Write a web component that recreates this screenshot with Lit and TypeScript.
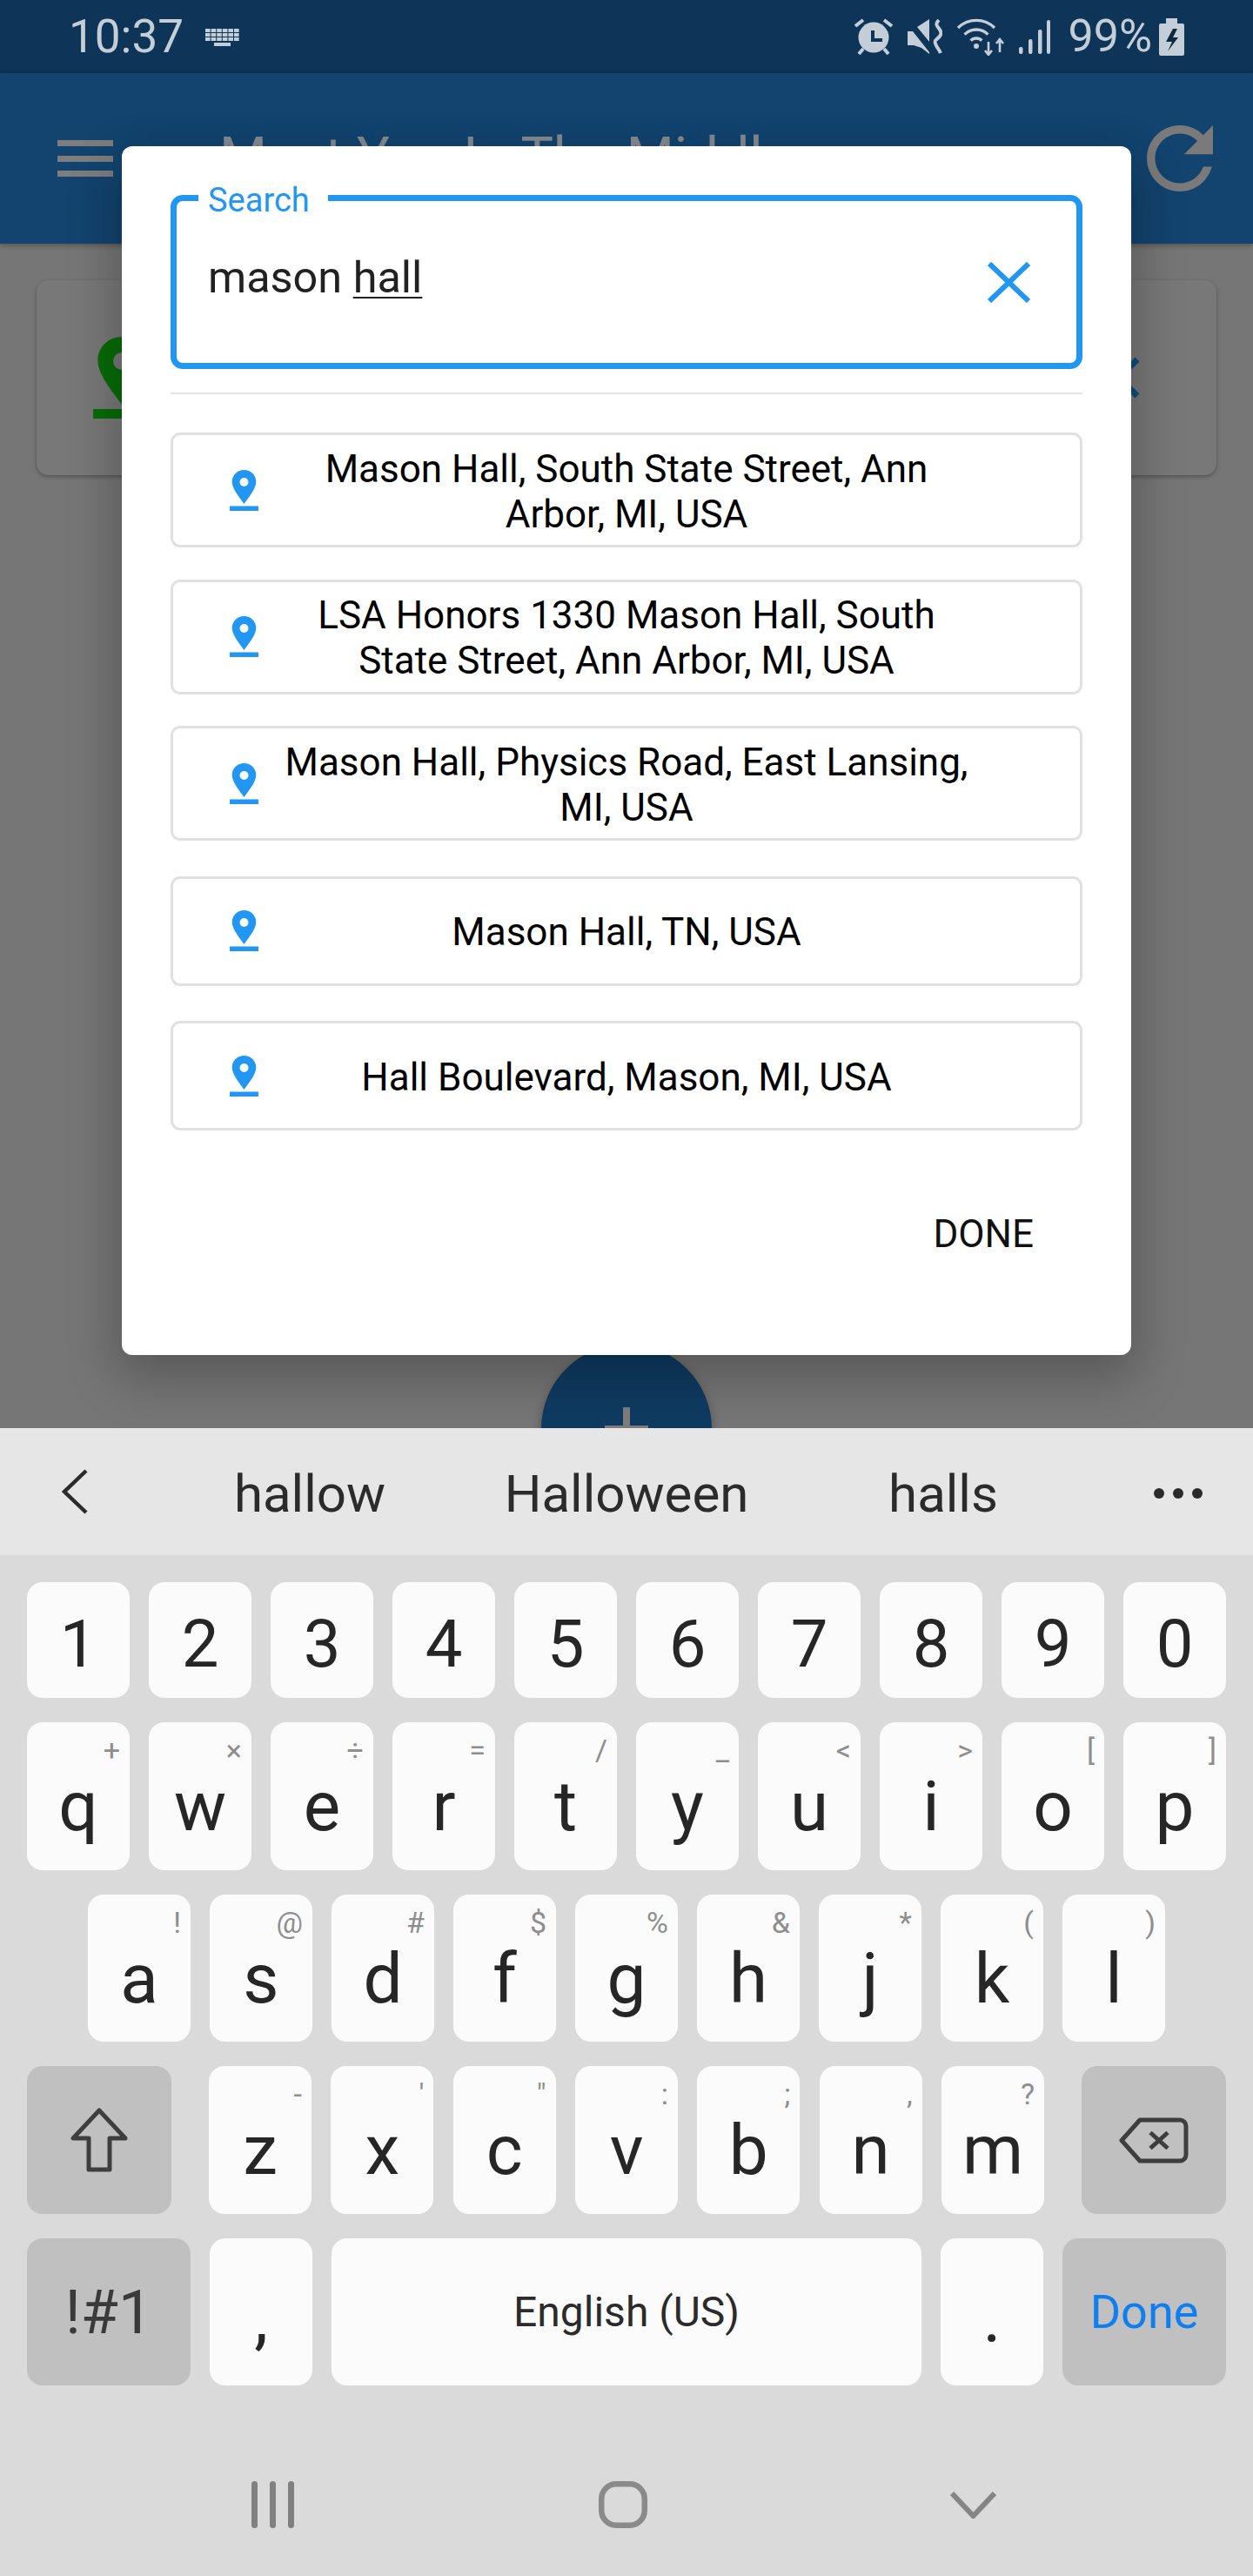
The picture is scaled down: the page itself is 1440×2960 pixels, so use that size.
import { LitElement, html, css, svg } from 'lit';
import { customElement } from 'lit/decorators.js';

type KeyDef = [string, string?];

const DIGITS = ['1', '2', '3', '4', '5', '6', '7', '8', '9', '0'];
const ROW_Q: KeyDef[] = [['q', '+'], ['w', '×'], ['e', '÷'], ['r', '='], ['t', '/'], ['y', '_'], ['u', '<'], ['i', '>'], ['o', '['], ['p', ']']];
const ROW_A: KeyDef[] = [['a', '!'], ['s', '@'], ['d', '#'], ['f', '$'], ['g', '%'], ['h', '&'], ['j', '*'], ['k', '('], ['l', ')']];
const ROW_Z: KeyDef[] = [['z', '-'], ['x', "'"], ['c', '"'], ['v', ':'], ['b', ';'], ['n', ','], ['m', '?']];

const RESULTS = [
  ['Mason Hall, South State Street, Ann', 'Arbor, MI, USA'],
  ['LSA Honors 1330 Mason Hall, South', 'State Street, Ann Arbor, MI, USA'],
  ['Mason Hall, Physics Road, East Lansing,', 'MI, USA'],
  ['Mason Hall, TN, USA'],
  ['Hall Boulevard, Mason, MI, USA'],
];

const pin = (color: string, hole: string, w: number, h: number) => html`
  <svg width=${w} height=${h} viewBox="0 0 33 47">
    ${svg`<path fill=${color} d="M16.5 0C8.8 0 2.7 6 2.7 13.5c0 8.5 9 18.5 13.8 25.5 4.8-7 13.8-17 13.8-25.5C30.3 6 24.2 0 16.5 0z"/>
    <circle cx="16.5" cy="14" r="5" fill=${hole}/>
    <rect x="0" y="41.5" width="33" height="5.5" fill=${color}/>`}
  </svg>
`;

@customElement('app-root')
export class AppRoot extends LitElement {
  static override styles = css`
    :host {
      display: block;
      width: 1440px;
      height: 2960px;
      overflow: hidden;
      font-family: Roboto, 'Liberation Sans', sans-serif;
      background: #dadada;
    }

    .screen {
      position: relative;
      height: 1641px;
      overflow: hidden;
      background: #767676;
    }

    /* status bar */
    .status {
      height: 84px;
      display: flex;
      align-items: center;
      padding: 0 79px 0 79px;
      background: #0e3557;
      color: #c3ced8;
      font-size: 53px;
      line-height: 84px;
    }
    .kbd-icon {
      margin-left: 25px;
      margin-top: 2px;
    }
    .status-right {
      margin-left: auto;
      display: flex;
      align-items: center;
      gap: 16px;
      font-size: 52px;
    }
    .pct {
      margin-left: 4px;
    }
    .batt {
      margin-left: -8px;
    }

    /* app bar */
    .appbar {
      height: 196px;
      display: flex;
      align-items: center;
      padding: 0 46px 0 66px;
      background: #12446f;
      box-shadow: 0 2px 6px rgba(0, 0, 0, 0.3);
    }
    .burger {
      width: 64px;
      height: 42px;
      display: flex;
      flex-direction: column;
      justify-content: space-between;
    }
    .burger span {
      height: 7px;
      background: #7d7d7d;
    }
    .title {
      margin-left: 122px;
      margin-bottom: 4px;
      font-size: 63px;
      color: #868b90;
      white-space: nowrap;
    }
    .refresh {
      margin-left: auto;
    }

    /* card behind the dialog */
    .card {
      margin: 42px 42px 0 42px;
      height: 224px;
      box-sizing: border-box;
      padding: 0 88px 0 65px;
      display: flex;
      align-items: center;
      justify-content: space-between;
      background: #787878;
      border-radius: 14px;
      box-shadow: 0 2px 5px rgba(0, 0, 0, 0.3);
    }

    .fab {
      position: absolute;
      left: 622px;
      top: 1544px;
      width: 196px;
      height: 196px;
      border-radius: 50%;
      background: #0f3b61;
      box-shadow: 0 4px 12px rgba(0, 0, 0, 0.3);
    }
    .fab::before,
    .fab::after {
      content: '';
      position: absolute;
      background: #7d7d7d;
    }
    .fab::before {
      left: 73px;
      top: 94px;
      width: 50px;
      height: 8px;
    }
    .fab::after {
      left: 94px;
      top: 73px;
      width: 8px;
      height: 50px;
    }

    /* dialog */
    .dialog {
      position: absolute;
      left: 140px;
      top: 168px;
      width: 1160px;
      height: 1389px;
      box-sizing: border-box;
      padding: 56px;
      background: #fff;
      border-radius: 12px;
      box-shadow: 0 24px 60px 6px rgba(0, 0, 0, 0.2), 0 9px 46px 8px rgba(0, 0, 0, 0.06);
    }
    .field {
      position: relative;
      height: 200px;
      box-sizing: border-box;
      display: flex;
      align-items: center;
      padding: 0 53px 0 36px;
      border: 7px solid #2196f3;
      border-radius: 14px;
    }
    .field-label {
      position: absolute;
      left: 25px;
      top: -19px;
      padding: 0 21px 0 11px;
      background: #fff;
      color: #2196f3;
      font-size: 38px;
      line-height: 36px;
    }
    .field-text {
      margin-bottom: 10px;
      font-size: 50.4px;
      line-height: 60px;
      color: #212121;
    }
    .field-text u {
      text-decoration-thickness: 2px;
      text-underline-offset: 5px;
    }
    .clear {
      margin-left: auto;
    }
    .divider {
      margin-top: 27px;
      height: 2px;
      background: #e4e4e4;
    }
    .results {
      margin-top: 44px;
      display: flex;
      flex-direction: column;
      gap: 36.5px;
    }
    .result {
      display: grid;
      grid-template-columns: 1fr auto 1fr;
      align-items: center;
      box-sizing: border-box;
      height: 132px;
      padding: 0 65px;
      border: 3px solid #e0e0e0;
      border-radius: 11px;
      color: #000;
      font-size: 44px;
      line-height: 52px;
      text-align: center;
    }
    .result.single {
      height: 126px;
      margin-top: 4px;
    }
    .result-text {
      padding-top: 3px;
      white-space: nowrap;
    }
    .done {
      margin-top: 94px;
      padding-right: 56px;
      text-align: right;
      font-size: 44px;
      line-height: 50px;
      color: #111;
    }

    /* keyboard */
    .suggest {
      height: 146px;
      display: grid;
      grid-template-columns: 174px 364px 364px 364px 174px;
      align-items: center;
      background: #e6e6e6;
      color: #2b2b2b;
      font-size: 60px;
      text-align: center;
    }
    .suggest span {
      padding-top: 5px;
    }
    .back {
      margin-left: 71px;
      display: block;
    }
    .dots {
      margin: 4px 0 0 60px;
      display: flex;
      gap: 10px;
    }
    .dots i {
      width: 12px;
      height: 12px;
      border-radius: 50%;
      background: #2b2b2b;
    }
    .keys {
      display: grid;
      grid-template-rows: 133px 170px 169px 170px 169px;
      row-gap: 28px;
      padding: 31px 31px 0;
    }
    .row {
      display: flex;
      gap: 22px;
    }
    .row.indent {
      padding-left: 70px;
    }
    .row.spread {
      justify-content: space-between;
    }
    .letters {
      display: flex;
      gap: 22.33px;
    }
    .key {
      position: relative;
      width: 118px;
      box-sizing: border-box;
      padding-top: 57px;
      background: #fbfbfb;
      border-radius: 18px;
      color: #262626;
      font-size: 80px;
      line-height: 80px;
      text-align: center;
    }
    .key.digit {
      padding-top: 33px;
      font-size: 76px;
      line-height: 76px;
    }
    .key.punct {
      padding-top: 52px;
    }
    .key.center {
      display: flex;
      align-items: center;
      justify-content: center;
      padding-top: 0;
    }
    .key.fn {
      background: #c0c0c0;
      color: #3a3a3a;
    }
    .key.wide-fn {
      width: 188px;
    }
    .key.icon-fn {
      width: 166px;
    }
    .key.space {
      flex: 1;
      font-size: 48px;
      color: #2b2b2b;
    }
    .key.sym {
      font-size: 70px;
    }
    .key.action {
      font-size: 54px;
      color: #0f7ef0;
    }
    .hint {
      position: absolute;
      top: 17px;
      right: 11px;
      color: #8e8e8e;
      font-size: 34px;
      line-height: 30px;
    }

    .nav {
      margin-top: 110px;
      padding-left: 112px;
      display: grid;
      grid-template-columns: repeat(3, 402.5px);
      justify-items: center;
      align-items: center;
    }
    svg {
      display: block;
    }
  `;

  private _key([label, hint]: KeyDef) {
    return html`<div class="key">${label}${hint ? html`<span class="hint">${hint}</span>` : ''}</div>`;
  }

  private _statusIcons() {
    return html`
      <svg width="44" height="42" viewBox="0 0 44 42" fill="none" stroke="#c3ced8" stroke-width="4">
        <circle cx="22" cy="22" r="17.5" fill="#c3ced8" stroke="none" />
        <path d="M21 14v11h11" stroke="#0e3557" stroke-width="4" />
        <path d="M1 9l9-7M34 2l9 7M5 41l5-6M34 35l5 6" />
      </svg>
      <svg width="41" height="40" viewBox="0 0 41 40" fill="#c3ced8">
        <path d="M1 14h6l19 24v2l-9-7-9-3H1zM12 9L26 0v26z" />
        <path d="M37 1c-8 8 5 9 2 17-3 6-8 5-6 10 1 4 4 6 6 11" fill="none" stroke="#c3ced8" stroke-width="4" />
      </svg>
      <svg width="56" height="43" viewBox="0 0 56 43" fill="none" stroke="#c3ced8" stroke-width="3.4">
        <path d="M2 11A30 30 0 0 1 44 11M9.6 18.6A19 19 0 0 1 36.4 18.6M16.6 25.6A9 9 0 0 1 29.4 25.6" />
        <circle cx="23" cy="32" r="3" fill="#c3ced8" stroke="none" />
        <path d="M37 27v14M33 37l4 5 4-5M50 39V25M46 29l4-5 4 5" stroke-width="2.6" />
      </svg>
      <svg width="36" height="40" viewBox="0 0 36 40" fill="#c3ced8">
        <rect x="0" y="32" width="4.5" height="8" rx="2" />
        <rect x="11" y="23" width="4.5" height="17" rx="2" />
        <rect x="22" y="12" width="4.5" height="28" rx="2" />
        <rect x="32" y="1" width="4" height="39" rx="2" />
      </svg>
      <span class="pct">99%</span>
      <svg class="batt" width="29" height="43" viewBox="0 0 29 43">
        <path fill="#c3ced8" d="M8 0h13v6h6a2 2 0 0 1 2 2v33a2 2 0 0 1-2 2H2a2 2 0 0 1-2-2V8a2 2 0 0 1 2-2h6z" />
        <path fill="#10293f" d="M16 12L8 27h7l-5 11 12-16h-6l5-10z" />
      </svg>
    `;
  }

  private _keyboardGlyph() {
    const squares = [0, 1, 2].flatMap((r) =>
      [0, 1, 2, 3, 4, 5].map((c) => svg`<rect x=${c * 6.6} y=${r * 5} width="5.6" height="4" />`)
    );
    return html`
      <svg class="kbd-icon" width="39" height="20" viewBox="0 0 39 20" fill="#c3ced8">
        ${squares}
        ${svg`<rect x="10" y="16" width="19" height="4" />`}
      </svg>
    `;
  }

  override render() {
    return html`
      <div class="screen">
        <div class="status">
          <span>10:37</span>
          ${this._keyboardGlyph()}
          <div class="status-right">${this._statusIcons()}</div>
        </div>

        <div class="appbar">
          <div class="burger"><span></span><span></span><span></span></div>
          <div class="title">Meet You In The Middle</div>
          <svg class="refresh" width="76" height="76" viewBox="4 4 16 16" fill="#7a7a7a">
            <path
              d="M17.65 6.35C16.2 4.9 14.21 4 12 4c-4.42 0-7.99 3.58-7.99 8s3.57 8 7.99 8c3.73 0 6.84-2.55 7.73-6h-2.08c-.82 2.33-3.04 4-5.65 4-3.31 0-6-2.69-6-6s2.69-6 6-6c1.66 0 3.14.69 4.22 1.78L13 11h7V4l-2.35 2.35z"
            />
          </svg>
        </div>

        <div class="card">
          ${pin('#086c08', '#787878', 66, 94)}
          <svg width="48" height="48" viewBox="0 0 48 48" stroke="#0f4c81" stroke-width="7" fill="none">
            <path d="M3 3l42 42M45 3L3 45" />
          </svg>
        </div>

        <div class="fab"></div>

        <div class="dialog">
          <div class="field">
            <span class="field-label">Search</span>
            <span class="field-text">mason <u>hall</u></span>
            <svg class="clear" width="49" height="47" viewBox="0 0 49 47" stroke="#2196f3" stroke-width="6" fill="none">
              <path d="M2 2l45 43M47 2L2 45" />
            </svg>
          </div>
          <div class="divider"></div>
          <div class="results">
            ${RESULTS.map(
              (lines) => html`
                <div class="result ${lines.length === 1 ? 'single' : ''}">
                  ${pin('#2196f3', '#fff', 33, 47)}
                  <div class="result-text">${lines.map((l) => html`<div>${l}</div>`)}</div>
                  <span></span>
                </div>
              `
            )}
          </div>
          <div class="done">DONE</div>
        </div>
      </div>

      <div class="suggest">
        <svg class="back" width="30" height="52" viewBox="0 0 30 52" fill="none" stroke="#2b2b2b" stroke-width="4.5">
          <path d="M28 2L3 26l25 24" />
        </svg>
        <span>hallow</span>
        <span>Halloween</span>
        <span>halls</span>
        <div class="dots"><i></i><i></i><i></i></div>
      </div>

      <div class="keys">
        <div class="row">${DIGITS.map((d) => html`<div class="key digit">${d}</div>`)}</div>
        <div class="row">${ROW_Q.map((k) => this._key(k))}</div>
        <div class="row indent">${ROW_A.map((k) => this._key(k))}</div>
        <div class="row spread">
          <div class="key fn icon-fn center">
            <svg width="66" height="74" viewBox="0 0 66 74" fill="none" stroke="#3e3e3e" stroke-width="5" stroke-linejoin="round">
              <path d="M33 3L3 35h18v36h24V35h18z" />
            </svg>
          </div>
          <div class="letters">${ROW_Z.map((k) => this._key(k))}</div>
          <div class="key fn icon-fn center">
            <svg width="80" height="53" viewBox="0 0 80 53" fill="none" stroke="#3e3e3e" stroke-width="5" stroke-linejoin="round">
              <path d="M24 3h46a7 7 0 0 1 7 7v33a7 7 0 0 1-7 7H24L3 26.5z" />
              <path d="M36 17.5l20 18M56 17.5l-20 18" />
            </svg>
          </div>
        </div>
        <div class="row">
          <div class="key fn wide-fn center sym">!#1</div>
          <div class="key punct">,</div>
          <div class="key space center">English (US)</div>
          <div class="key punct">.</div>
          <div class="key fn wide-fn center action">Done</div>
        </div>
      </div>

      <div class="nav">
        <svg width="49" height="54" viewBox="0 0 49 54" fill="#808080">
          <rect x="0" y="0" width="7" height="54" rx="3.5" />
          <rect x="21" y="0" width="7" height="54" rx="3.5" />
          <rect x="42" y="0" width="7" height="54" rx="3.5" />
        </svg>
        <svg width="56" height="54" viewBox="0 0 56 54" fill="none" stroke="#8a8a8a" stroke-width="6.5">
          <rect x="3.25" y="3.25" width="49.5" height="47.5" rx="17" />
        </svg>
        <svg width="53" height="31" viewBox="0 0 53 31" fill="none" stroke="#858585" stroke-width="6">
          <path d="M2 2l24.5 26L51 2" />
        </svg>
      </div>
    `;
  }
}

declare global {
  interface HTMLElementTagNameMap {
    'app-root': AppRoot;
  }
}
